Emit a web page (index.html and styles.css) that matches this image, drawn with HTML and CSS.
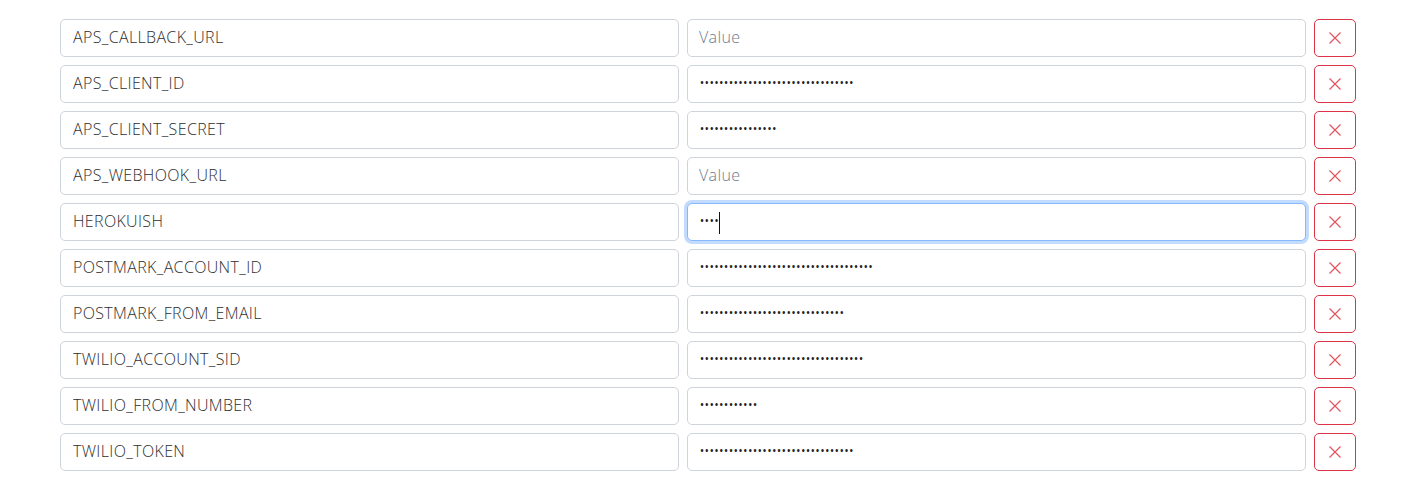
FILE: index.html
```html
<!DOCTYPE html>
<html lang="en">
<head>
<meta charset="utf-8">
<title>Environment variables</title>
<link rel="stylesheet" href="styles.css">
</head>
<body>
<main class="env-list">
  <div class="env-row">
    <input class="field" type="text" value="APS_CALLBACK_URL">
    <input class="field secret" type="password" placeholder="Value" value="">
    <button class="remove" type="button" aria-label="Remove"><svg viewBox="0 0 16 16"><path d="M2.5 2.5l11 11M13.5 2.5l-11 11"/></svg></button>
  </div>
  <div class="env-row">
    <input class="field" type="text" value="APS_CLIENT_ID">
    <input class="field secret" type="password" placeholder="Value" value="11111111111111111111111111111111">
    <button class="remove" type="button" aria-label="Remove"><svg viewBox="0 0 16 16"><path d="M2.5 2.5l11 11M13.5 2.5l-11 11"/></svg></button>
  </div>
  <div class="env-row">
    <input class="field" type="text" value="APS_CLIENT_SECRET">
    <input class="field secret" type="password" placeholder="Value" value="1111111111111111">
    <button class="remove" type="button" aria-label="Remove"><svg viewBox="0 0 16 16"><path d="M2.5 2.5l11 11M13.5 2.5l-11 11"/></svg></button>
  </div>
  <div class="env-row">
    <input class="field" type="text" value="APS_WEBHOOK_URL">
    <input class="field secret" type="password" placeholder="Value" value="">
    <button class="remove" type="button" aria-label="Remove"><svg viewBox="0 0 16 16"><path d="M2.5 2.5l11 11M13.5 2.5l-11 11"/></svg></button>
  </div>
  <div class="env-row">
    <input class="field" type="text" value="HEROKUISH">
    <div class="focus-wrap">
      <input class="field secret focused" type="password" placeholder="Value" value="1111">
      <span class="caret" aria-hidden="true"></span>
    </div>
    <button class="remove" type="button" aria-label="Remove"><svg viewBox="0 0 16 16"><path d="M2.5 2.5l11 11M13.5 2.5l-11 11"/></svg></button>
  </div>
  <div class="env-row">
    <input class="field" type="text" value="POSTMARK_ACCOUNT_ID">
    <input class="field secret" type="password" placeholder="Value" value="111111111111111111111111111111111111">
    <button class="remove" type="button" aria-label="Remove"><svg viewBox="0 0 16 16"><path d="M2.5 2.5l11 11M13.5 2.5l-11 11"/></svg></button>
  </div>
  <div class="env-row">
    <input class="field" type="text" value="POSTMARK_FROM_EMAIL">
    <input class="field secret" type="password" placeholder="Value" value="111111111111111111111111111111">
    <button class="remove" type="button" aria-label="Remove"><svg viewBox="0 0 16 16"><path d="M2.5 2.5l11 11M13.5 2.5l-11 11"/></svg></button>
  </div>
  <div class="env-row">
    <input class="field" type="text" value="TWILIO_ACCOUNT_SID">
    <input class="field secret" type="password" placeholder="Value" value="1111111111111111111111111111111111">
    <button class="remove" type="button" aria-label="Remove"><svg viewBox="0 0 16 16"><path d="M2.5 2.5l11 11M13.5 2.5l-11 11"/></svg></button>
  </div>
  <div class="env-row">
    <input class="field" type="text" value="TWILIO_FROM_NUMBER">
    <input class="field secret" type="password" placeholder="Value" value="111111111111">
    <button class="remove" type="button" aria-label="Remove"><svg viewBox="0 0 16 16"><path d="M2.5 2.5l11 11M13.5 2.5l-11 11"/></svg></button>
  </div>
  <div class="env-row">
    <input class="field" type="text" value="TWILIO_TOKEN">
    <input class="field secret" type="password" placeholder="Value" value="11111111111111111111111111111111">
    <button class="remove" type="button" aria-label="Remove"><svg viewBox="0 0 16 16"><path d="M2.5 2.5l11 11M13.5 2.5l-11 11"/></svg></button>
  </div>
</main>
</body>
</html>
```

FILE: styles.css
```css
* { box-sizing: border-box; }

html, body {
  margin: 0;
  padding: 0;
  background: #ffffff;
}

body {
  font-family: "Open Sans", "Liberation Sans", sans-serif;
}

.env-list {
  width: 1296px;
  margin: 19px auto 0;
  display: flex;
  flex-direction: column;
  gap: 8px;
}

.env-row {
  display: grid;
  grid-template-columns: 1fr 1fr 42px;
  gap: 8px;
  height: 38px;
}

.field {
  height: 38px;
  width: 100%;
  margin: 0;
  padding: 0 12px 2px;
  border: 1px solid #ced4da;
  border-radius: 5px;
  background: #fff;
  color: #2e2e2e;
  font-family: "Open Sans", "Liberation Sans", sans-serif;
  font-weight: 300;
  font-size: 16px;
  letter-spacing: 0.35px;
  outline: none;
}

.field::placeholder {
  color: #6d7a8c;
  opacity: 1;
}

.secret {
  color: #222;
  letter-spacing: -1.2px;
  padding-left: 11px;
}

.secret::placeholder {
  letter-spacing: 0.35px;
}

.focused,
.field:focus {
  border-color: #86b7fe;
  box-shadow: 0 0 0 3px rgba(13, 110, 253, 0.25);
}

.focus-wrap {
  position: relative;
  height: 38px;
}

.caret {
  position: absolute;
  left: 32px;
  top: 9px;
  width: 1px;
  height: 22px;
  background: #111;
}

.remove {
  width: 42px;
  height: 38px;
  margin: 0;
  padding: 0;
  border: 1px solid #dc3545;
  border-radius: 5px;
  background: #fff;
  display: flex;
  align-items: center;
  justify-content: center;
  cursor: pointer;
}

.remove svg {
  width: 16px;
  height: 16px;
  fill: none;
  stroke: #e0535f;
  stroke-width: 1.2;
}
```
